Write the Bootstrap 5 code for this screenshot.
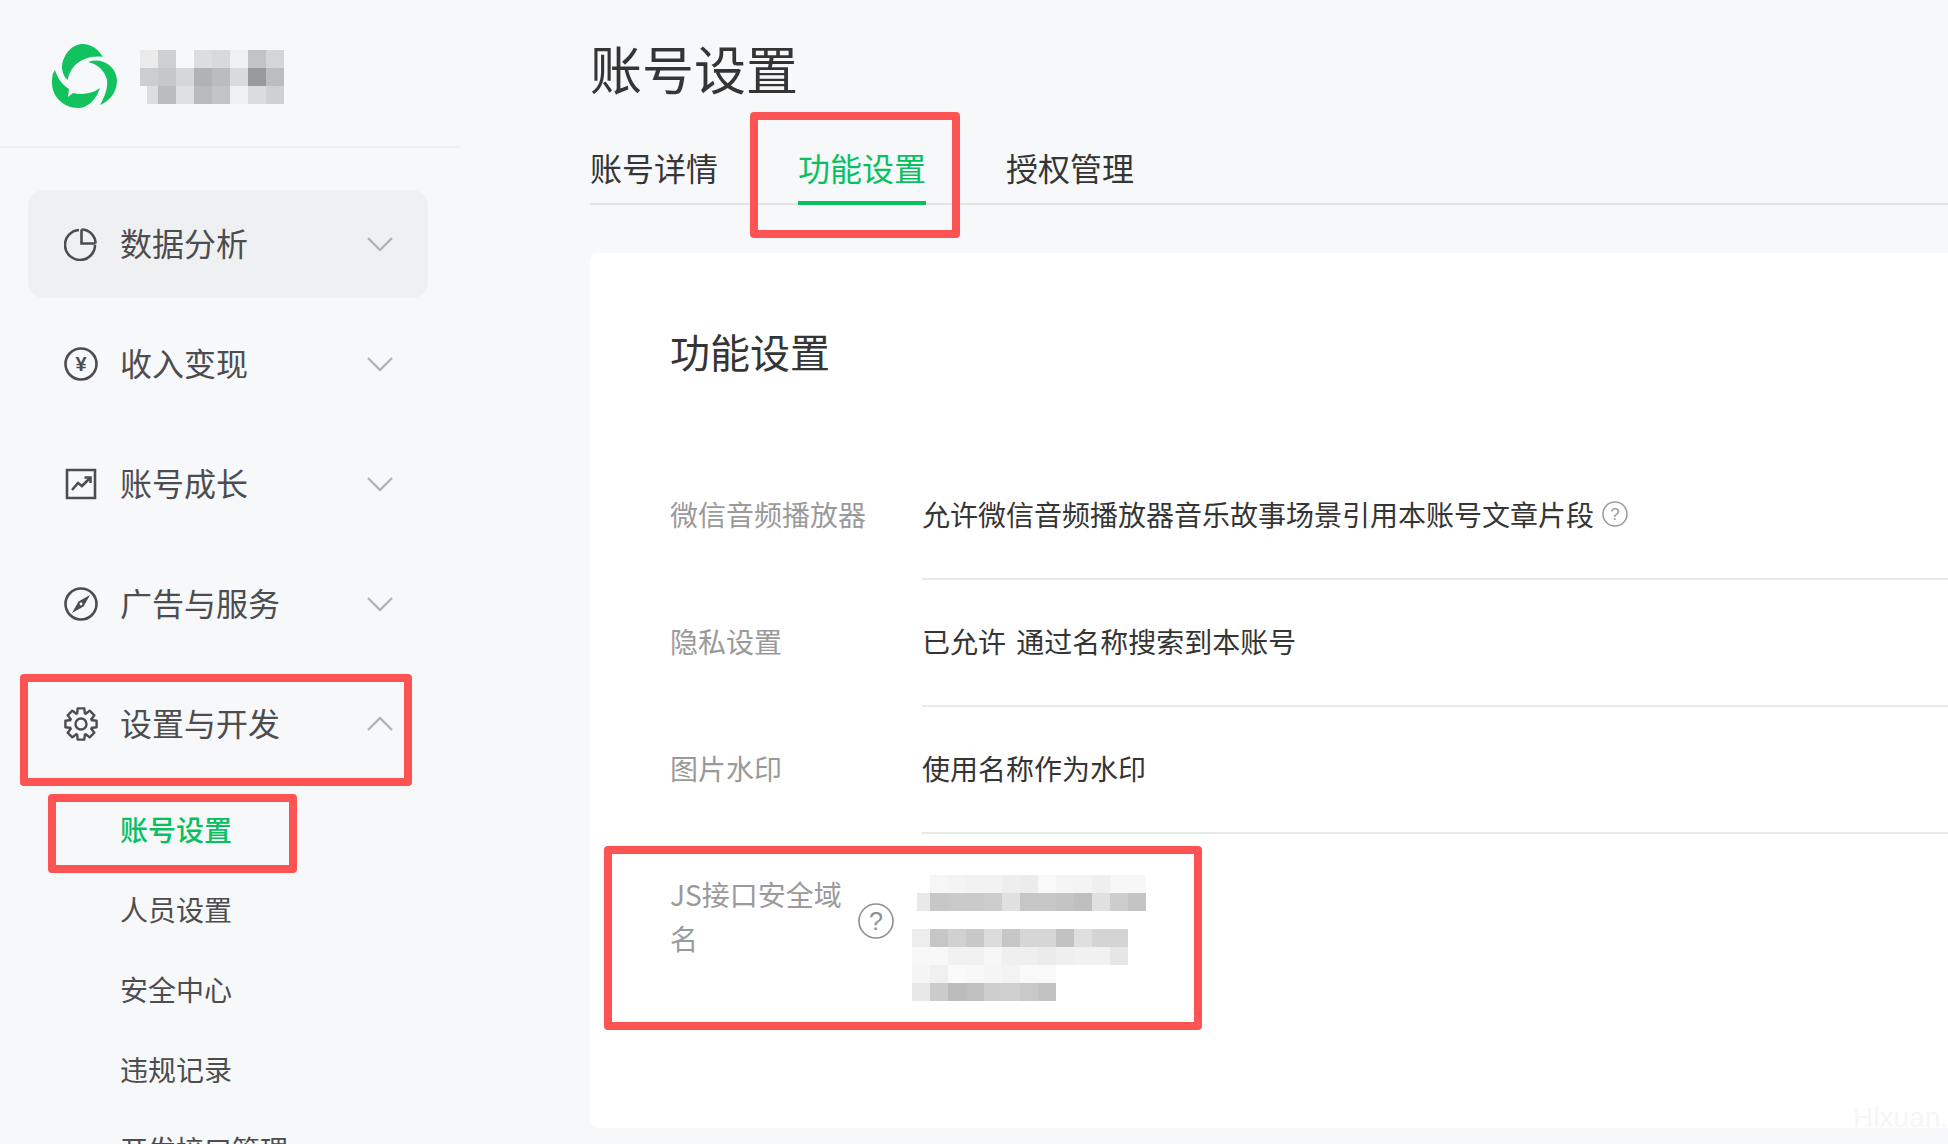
<!DOCTYPE html>
<html lang="zh-CN">
<head>
<meta charset="utf-8">
<title>账号设置</title>
<link href="https://cdn.jsdelivr.net/npm/bootstrap@5.3.0/dist/css/bootstrap.min.css" rel="stylesheet">
<style>
html,body{height:1144px;overflow:hidden}
body{background:#f7f8fa;font-family:"Noto Sans CJK SC","Liberation Sans",sans-serif;color:#353535;position:relative}
.side-col{width:460px;flex:none}
.brand-bar{height:148px;padding-left:52px;border-bottom:2px solid #f0f1f3;gap:23px}
.brand-logo{margin-top:6px}
.brand-blur{margin-top:7px}
.menu-list{padding:42px 32px 0 28px;gap:12px}
.menu-row{height:108px;padding:0 35px 0 36px;border-radius:16px;font-size:32px;line-height:44px;color:#4d4d4f;gap:22px}
.menu-row.is-on{background:#eff0f2}
.menu-row .menu-text{padding-bottom:4px}
.menu-row .chev{margin-left:auto}
.sub-list{padding-top:12px}
.sub-row{height:80px;padding:0 0 3px 120px;font-size:28px;line-height:40px;color:#4d4d4f}
.sub-row.is-on{color:#07c160;font-weight:500}
.main-col{padding-left:130px;min-width:0}
.page-title{font-size:52px;line-height:70px;margin:33px 0 0;font-weight:400;color:#353535}
.tab-bar{margin-top:41px;height:61px;border-bottom:2px solid #e2e3e5;gap:80px}
.tab-item{font-size:32px;line-height:44px;height:61px;color:#353535;text-decoration:none;padding:1px 0 0}
.tab-item.is-on{color:#07c160;border-bottom:4px solid #07c160}
.panel{margin-top:48px;height:875px;border:0;border-radius:8px 0 0 8px;padding:70px 0 0 80px;position:relative}
.panel-title{font-size:40px;line-height:56px;font-weight:400;margin:0 0 74px;color:#353535}
.set-row{height:127px}
.set-label{width:252px;flex:none;font-size:28px;line-height:44px;color:#9a9a9a;padding-bottom:6px}
.set-value{flex:1;font-size:28px;line-height:44px;color:#353535;border-bottom:2px solid #e8e9eb;gap:8px;padding-bottom:4px;word-spacing:4px}
.js-row{padding-top:38px}
.js-text{width:180px;flex:none}
.js-wrap{width:252px;flex:none;font-size:28px;line-height:44px;color:#9a9a9a;gap:8px}
.js-help{margin-top:31px}
.js-blur{margin:3px 0 0 -10px}
.wm-text{right:0;bottom:-4px;font-size:28px;line-height:28px;color:#f6f6f6;font-family:"Liberation Sans",sans-serif}
.mark-box{border:8px solid #fd5353;border-radius:4px;pointer-events:none}
.mark-tab{left:750px;top:112px;width:210px;height:126px}
.mark-side{left:20px;top:674px;width:392px;height:112px}
.mark-sub{left:48px;top:794px;width:249px;height:79px}
.mark-js{left:604px;top:846px;width:598px;height:184px}
svg{display:block;flex:none}
</style>
</head>
<body>
<div class="d-flex">
  <aside class="side-col">
    <div class="brand-bar d-flex align-items-center">
      <svg class="brand-logo" width="65" height="65" viewBox="0 0 65 65" fill="#12c25e">
        <path d="M51 13C46 5 39 0 31 0C20 0 11 10 10 23C10 28 12 33 16 36C17 24 30 10 51 13Z"/>
        <path d="M36 18C50 13 64 22 65 36C65 48 58 57 48 61C53 52 56 44 55 36C53 27 46 20 36 18Z"/>
        <path d="M3 26C0 30 0 35 0 39C0 53 12 64 26 64C36 64 44 56 48 44C40 50 30 51 21 49L16 53L17 45C10 41 5 33 3 26Z"/>
      </svg>
      <svg class="brand-blur" width="144" height="54" viewBox="0 0 8 3" shape-rendering="crispEdges">
        <rect x="0" y="0" width="1" height="1" fill="#ebebec"/><rect x="1" y="0" width="1" height="1" fill="#cfd0d2"/><rect x="3" y="0" width="1" height="1" fill="#dcdde0"/><rect x="4" y="0" width="1" height="1" fill="#d8d9db"/><rect x="5" y="0" width="1" height="1" fill="#eff0f2"/><rect x="6" y="0" width="1" height="1" fill="#c2c3c5"/><rect x="7" y="0" width="1" height="1" fill="#d4d5d7"/>
        <rect x="0" y="1" width="1" height="1" fill="#cdced0"/><rect x="1" y="1" width="1" height="1" fill="#c6c7c9"/><rect x="2" y="1" width="1" height="1" fill="#d6d7d9"/><rect x="3" y="1" width="1" height="1" fill="#b1b2b4"/><rect x="4" y="1" width="1" height="1" fill="#bbbcbe"/><rect x="5" y="1" width="1" height="1" fill="#d9dadc"/><rect x="6" y="1" width="1" height="1" fill="#98999b"/><rect x="7" y="1" width="1" height="1" fill="#bcbdbf"/>
        <rect x="0.4" y="2" width="0.6" height="1" fill="#dcdde0"/><rect x="1" y="2" width="1" height="1" fill="#bbbcbe"/><rect x="2" y="2" width="1" height="1" fill="#dfe0e2"/><rect x="3" y="2" width="1" height="1" fill="#b9babc"/><rect x="4" y="2" width="1" height="1" fill="#c3c4c6"/><rect x="5" y="2" width="1" height="1" fill="#eff0f2"/><rect x="6" y="2" width="1" height="1" fill="#dbdcde"/><rect x="7" y="2" width="1" height="1" fill="#cfd0d2"/>
      </svg>
    </div>
    <div class="menu-list d-flex flex-column">
      <div class="menu-row is-on d-flex align-items-center">
        <svg width="34" height="34" viewBox="0 0 34 34" fill="none" stroke="#4d4d4f" stroke-width="2.6"><path d="M31 18A15 15 0 1 1 15 3"/><path d="M17.500 2.500V16.500H31.500"/><path d="M17.500 2.500A14 14 0 0 1 31.500 16.500"/></svg>
        <span class="menu-text">数据分析</span>
        <svg class="chev" width="26" height="14" viewBox="0 0 26 14" fill="none" stroke="#b2b2b2" stroke-width="2.4"><path d="M1 1L13 13L25 1"/></svg>
      </div>
      <div class="menu-row d-flex align-items-center">
        <svg width="34" height="34" viewBox="0 0 34 34" fill="none" stroke="#4d4d4f" stroke-width="2.6"><circle cx="17" cy="17" r="15.500"/><text x="17" y="24" text-anchor="middle" font-family="Liberation Sans" font-weight="700" font-size="20" fill="#4d4d4f" stroke="none">¥</text></svg>
        <span class="menu-text">收入变现</span>
        <svg class="chev" width="26" height="14" viewBox="0 0 26 14" fill="none" stroke="#b2b2b2" stroke-width="2.4"><path d="M1 1L13 13L25 1"/></svg>
      </div>
      <div class="menu-row d-flex align-items-center">
        <svg width="34" height="34" viewBox="0 0 34 34" fill="none" stroke="#4d4d4f" stroke-width="2.6"><path d="M3 3H31V31H3Z"/><path d="M8 23L14 16L18 19L26 11"/><path d="M20.500 10.500H26.500V16" /></svg>
        <span class="menu-text">账号成长</span>
        <svg class="chev" width="26" height="14" viewBox="0 0 26 14" fill="none" stroke="#b2b2b2" stroke-width="2.4"><path d="M1 1L13 13L25 1"/></svg>
      </div>
      <div class="menu-row d-flex align-items-center">
        <svg width="34" height="34" viewBox="0 0 34 34" fill="none" stroke="#4d4d4f" stroke-width="2.6"><circle cx="17" cy="17" r="15.500"/><path d="M26 8L19.500 19.500L8 26L14.500 14.500Z" fill="#4d4d4f" stroke="none"/><circle cx="17" cy="17" r="1.400" fill="#f7f8fa" stroke="none"/></svg>
        <span class="menu-text">广告与服务</span>
        <svg class="chev" width="26" height="14" viewBox="0 0 26 14" fill="none" stroke="#b2b2b2" stroke-width="2.4"><path d="M1 1L13 13L25 1"/></svg>
      </div>
      <div class="menu-row d-flex align-items-center">
        <svg width="34" height="34" viewBox="0 0 34 34" fill="none" stroke="#4d4d4f" stroke-width="2.4" stroke-linejoin="round">
          <path d="M13 7.300L13.700 1.400H20.300L21 7.300"/>
          <path transform="rotate(45 17 17)" d="M13 7.300L13.700 1.400H20.300L21 7.300"/>
          <path transform="rotate(90 17 17)" d="M13 7.300L13.700 1.400H20.300L21 7.300"/>
          <path transform="rotate(135 17 17)" d="M13 7.300L13.700 1.400H20.300L21 7.300"/>
          <path transform="rotate(180 17 17)" d="M13 7.300L13.700 1.400H20.300L21 7.300"/>
          <path transform="rotate(225 17 17)" d="M13 7.300L13.700 1.400H20.300L21 7.300"/>
          <path transform="rotate(270 17 17)" d="M13 7.300L13.700 1.400H20.300L21 7.300"/>
          <path transform="rotate(315 17 17)" d="M13 7.300L13.700 1.400H20.300L21 7.300"/>
          <circle cx="17" cy="17" r="5.500"/>
        </svg>
        <span class="menu-text">设置与开发</span>
        <svg class="chev" width="26" height="14" viewBox="0 0 26 14" fill="none" stroke="#b2b2b2" stroke-width="2.4"><path d="M1 13L13 1L25 13"/></svg>
      </div>
    </div>
    <div class="sub-list">
      <div class="sub-row is-on d-flex align-items-center">账号设置</div>
      <div class="sub-row d-flex align-items-center">人员设置</div>
      <div class="sub-row d-flex align-items-center">安全中心</div>
      <div class="sub-row d-flex align-items-center">违规记录</div>
      <div class="sub-row d-flex align-items-center">开发接口管理</div>
    </div>
  </aside>
  <main class="main-col flex-grow-1">
    <h1 class="page-title">账号设置</h1>
    <div class="tab-bar d-flex">
      <a class="tab-item" href="#">账号详情</a>
      <a class="tab-item is-on" href="#">功能设置</a>
      <a class="tab-item" href="#">授权管理</a>
    </div>
    <div class="card panel">
      <h2 class="panel-title">功能设置</h2>
      <div class="set-row d-flex">
        <div class="set-label d-flex align-items-center">微信音频播放器</div>
        <div class="set-value d-flex align-items-center">
          <span>允许微信音频播放器音乐故事场景引用本账号文章片段</span>
          <svg width="26" height="26" viewBox="0 0 26 26" fill="none" stroke="#9a9a9a" stroke-width="1.500"><circle cx="13" cy="13" r="12"/><text x="13" y="19" text-anchor="middle" font-family="Liberation Sans" font-size="17" fill="#9a9a9a" stroke="none">?</text></svg>
        </div>
      </div>
      <div class="set-row d-flex">
        <div class="set-label d-flex align-items-center">隐私设置</div>
        <div class="set-value d-flex align-items-center">已允许 通过名称搜索到本账号</div>
      </div>
      <div class="set-row d-flex">
        <div class="set-label d-flex align-items-center">图片水印</div>
        <div class="set-value d-flex align-items-center">使用名称作为水印</div>
      </div>
      <div class="js-row d-flex">
        <div class="js-wrap d-flex">
          <div class="js-text">JS接口安全域名</div>
          <svg class="js-help" width="36" height="36" viewBox="0 0 36 36" fill="none" stroke="#8f8f8f" stroke-width="1.600"><circle cx="18" cy="18" r="17"/><text x="18" y="27" text-anchor="middle" font-family="Liberation Sans" font-size="25" fill="#8f8f8f" stroke="none">?</text></svg>
        </div>
        <svg class="js-blur" width="234" height="126" viewBox="0 0 13 7" shape-rendering="crispEdges">
          <rect x="1" y="0" width="1" height="1" fill="#f6f6f6"/><rect x="2" y="0" width="1" height="1" fill="#f4f4f4"/><rect x="3" y="0" width="1" height="1" fill="#f2f2f2"/><rect x="4" y="0" width="1" height="1" fill="#f2f2f2"/><rect x="5" y="0" width="1" height="1" fill="#eeeeee"/><rect x="6" y="0" width="1" height="1" fill="#ececec"/><rect x="7" y="0" width="1" height="1" fill="#f9f9f9"/><rect x="8" y="0" width="1" height="1" fill="#f5f5f5"/><rect x="9" y="0" width="1" height="1" fill="#f4f4f4"/><rect x="10" y="0" width="1" height="1" fill="#efefef"/><rect x="11" y="0" width="2" height="1" fill="#f7f7f7"/>
          <rect x="0.300" y="1" width="0.700" height="1" fill="#e9e9e9"/><rect x="1" y="1" width="1" height="1" fill="#c7c7c7"/><rect x="2" y="1" width="1" height="1" fill="#cacaca"/><rect x="3" y="1" width="1" height="1" fill="#cacaca"/><rect x="4" y="1" width="1" height="1" fill="#cdcdcd"/><rect x="5" y="1" width="1" height="1" fill="#e0e0e0"/><rect x="6" y="1" width="1" height="1" fill="#c6c6c6"/><rect x="7" y="1" width="1" height="1" fill="#c6c6c6"/><rect x="8" y="1" width="1" height="1" fill="#c4c4c4"/><rect x="9" y="1" width="1" height="1" fill="#bfbfbf"/><rect x="10" y="1" width="1" height="1" fill="#e0e0e0"/><rect x="11" y="1" width="1" height="1" fill="#cdcdcd"/><rect x="12" y="1" width="1" height="1" fill="#c4c4c4"/>
          <rect x="0" y="3" width="1" height="1" fill="#ededed"/><rect x="1" y="3" width="1" height="1" fill="#c6c6c6"/><rect x="2" y="3" width="1" height="1" fill="#d1d1d1"/><rect x="3" y="3" width="1" height="1" fill="#c8c8c8"/><rect x="4" y="3" width="1" height="1" fill="#dcdcdc"/><rect x="5" y="3" width="1" height="1" fill="#c6c6c6"/><rect x="6" y="3" width="2" height="1" fill="#d6d6d6"/><rect x="8" y="3" width="1" height="1" fill="#c2c2c2"/><rect x="9" y="3" width="1" height="1" fill="#dfdfdf"/><rect x="10" y="3" width="2" height="1" fill="#d4d4d4"/>
          <rect x="0" y="4" width="2" height="1" fill="#f8f8f8"/><rect x="2" y="4" width="2" height="1" fill="#f1f1f1"/><rect x="4" y="4" width="1" height="1" fill="#f6f6f6"/><rect x="5" y="4" width="2" height="1" fill="#efefef"/><rect x="7" y="4" width="1" height="1" fill="#ebebeb"/><rect x="8" y="4" width="1" height="1" fill="#efefef"/><rect x="9" y="4" width="2" height="1" fill="#f1f1f1"/><rect x="11" y="4" width="1" height="1" fill="#e6e6e6"/>
          <rect x="0" y="5" width="1" height="1" fill="#f5f5f5"/><rect x="1" y="5" width="1" height="1" fill="#f0f0f0"/><rect x="2" y="5" width="1" height="1" fill="#fafafa"/><rect x="3" y="5" width="1" height="1" fill="#f8f8f8"/><rect x="4" y="5" width="1" height="1" fill="#f5f5f5"/><rect x="5" y="5" width="1" height="1" fill="#f3f3f3"/><rect x="6" y="5" width="2" height="1" fill="#f9f9f9"/>
          <rect x="0" y="6" width="1" height="1" fill="#e8e8e8"/><rect x="1" y="6" width="1" height="1" fill="#cbcbcb"/><rect x="2" y="6" width="1" height="1" fill="#bcbcbc"/><rect x="3" y="6" width="1" height="1" fill="#c0c0c0"/><rect x="4" y="6" width="1" height="1" fill="#cecece"/><rect x="5" y="6" width="1" height="1" fill="#cfcfcf"/><rect x="6" y="6" width="1" height="1" fill="#c9c9c9"/><rect x="7" y="6" width="1" height="1" fill="#c2c2c2"/>
        </svg>
      </div>
      <div class="wm-text position-absolute">Hlxuan.</div>
    </div>
  </main>
</div>
<div class="mark-box mark-tab position-absolute"></div>
<div class="mark-box mark-side position-absolute"></div>
<div class="mark-box mark-sub position-absolute"></div>
<div class="mark-box mark-js position-absolute"></div>
<script src="https://cdn.jsdelivr.net/npm/bootstrap@5.3.0/dist/js/bootstrap.bundle.min.js"></script>
</body>
</html>
